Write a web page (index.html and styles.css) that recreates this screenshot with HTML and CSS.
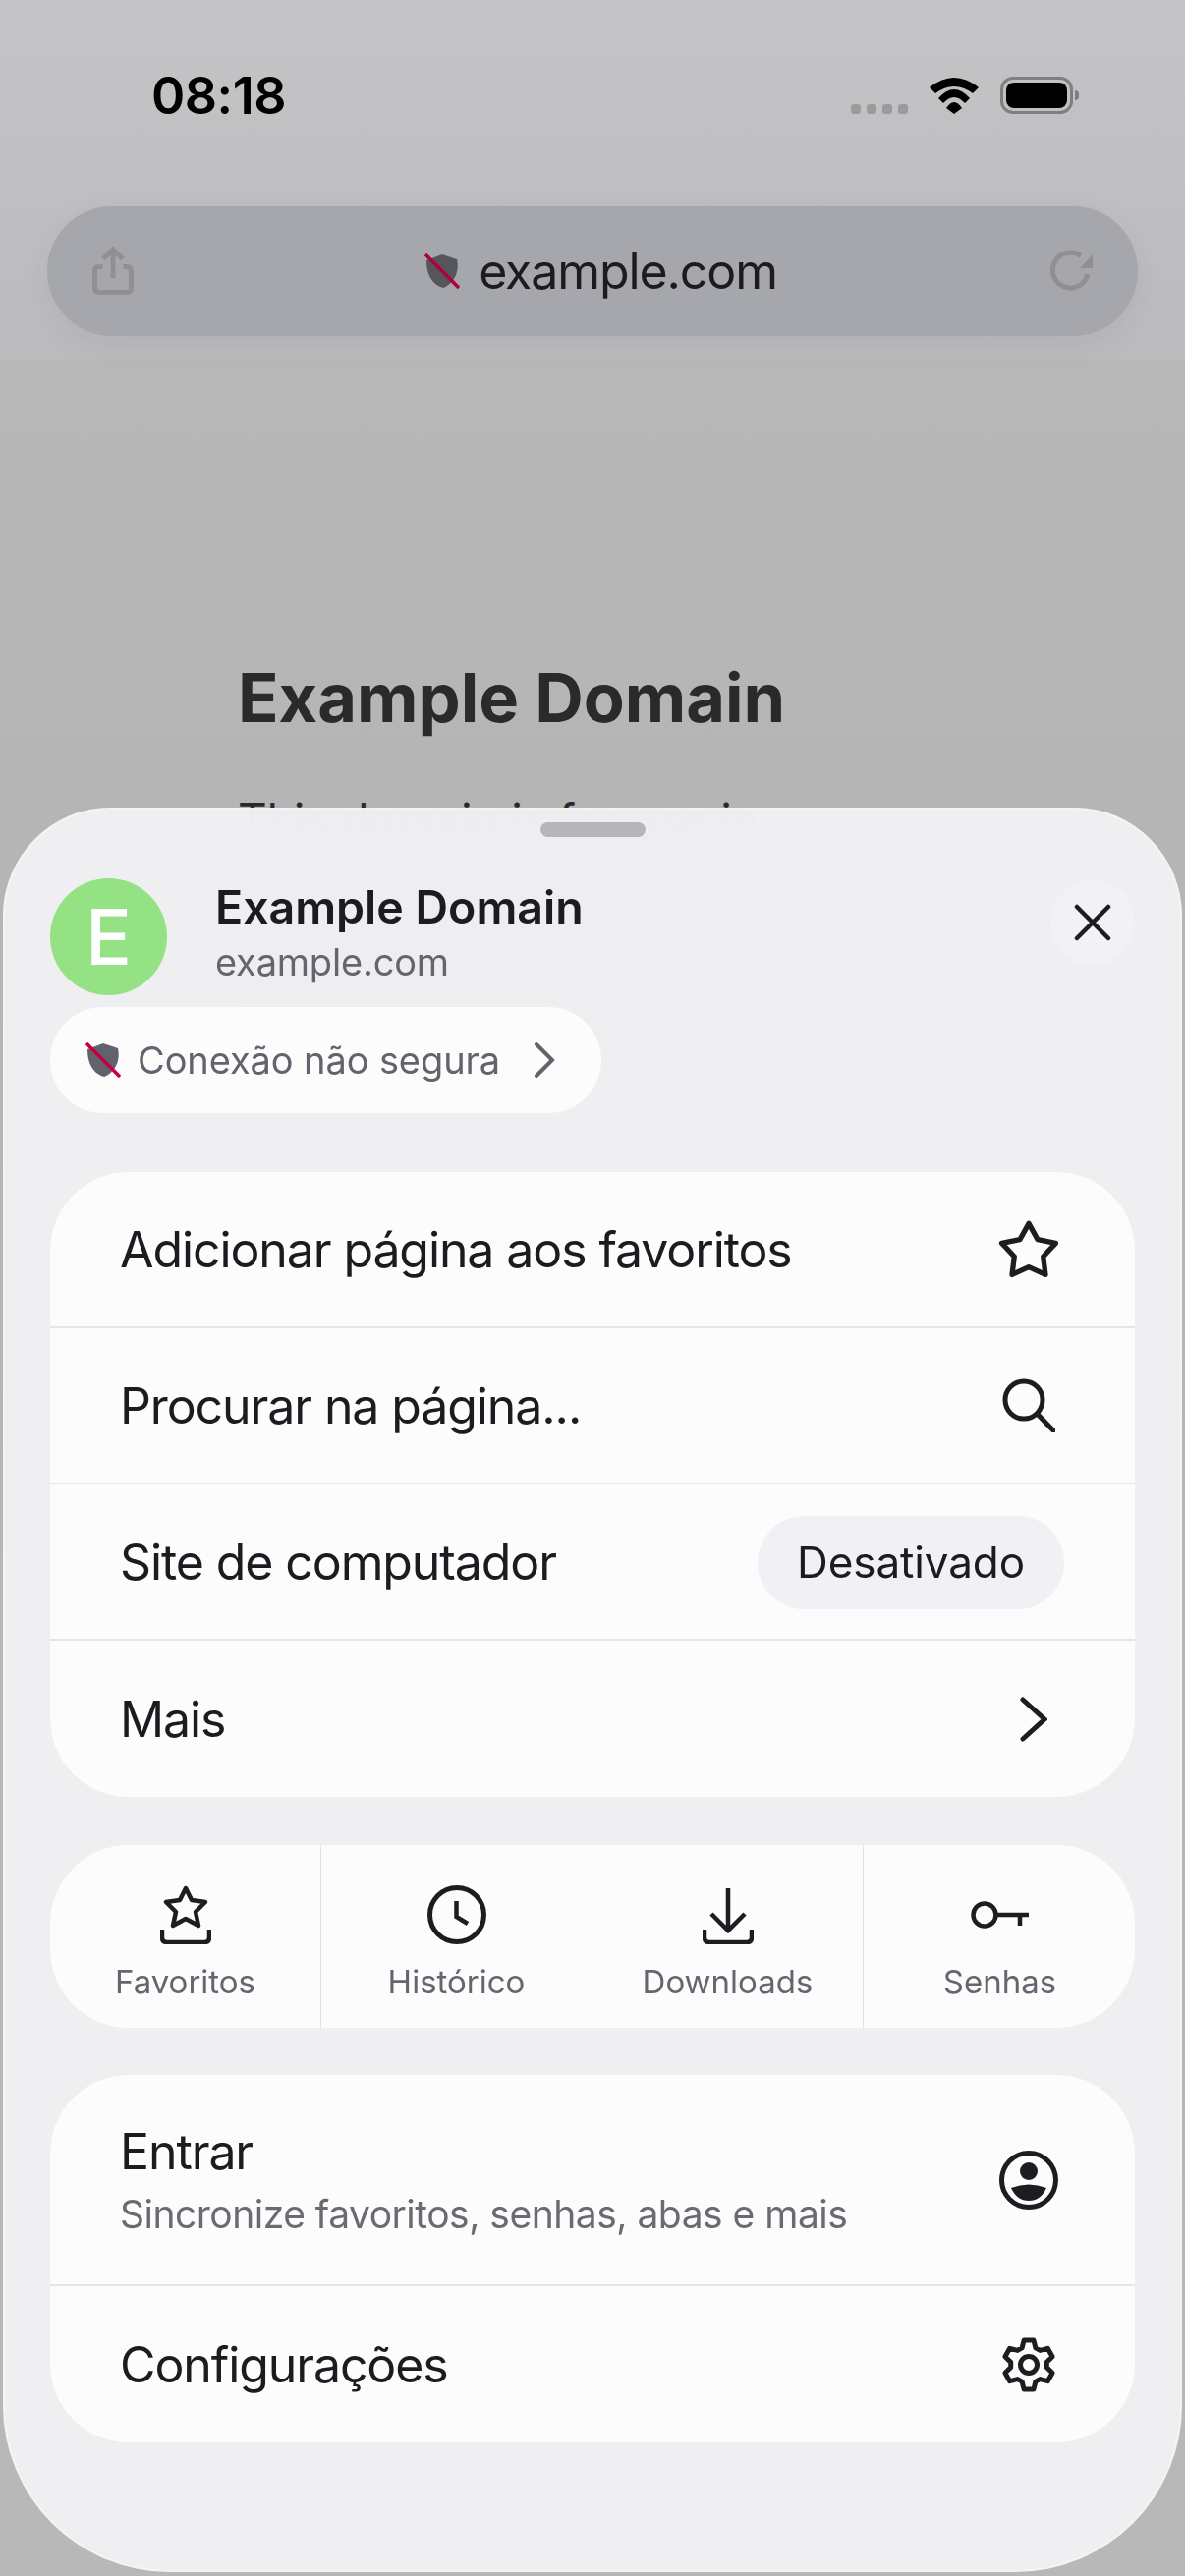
FILE: index.html
```html
<!DOCTYPE html>
<html lang="pt-BR">
<head>
<meta charset="utf-8">
<title>Example Domain</title>
<link rel="stylesheet" href="styles.css">
</head>
<body>
<div class="phone">
  <header class="topbar">
    <div class="status">
      <span class="time">08:18</span>
      <div class="status-icons">
        <div class="signal"><i></i><i></i><i></i><i></i></div>
        <svg class="wifi" width="50" height="37" viewBox="0 0 50 37"><path d="M0 10 Q25 -10 50 10 L44 16 Q25 2 6 16Z M9 21 Q25 3 41 21 L36 26 Q25 14 14 26Z M17 31 Q25 19 33 31 L25 37Z" fill="#000"/></svg>
        <div class="battery"><div class="battery-fill"></div><div class="battery-nub"></div></div>
      </div>
    </div>
    <div class="address">
      <svg class="share" width="44" height="50" viewBox="0 0 44 50" fill="none" stroke="#8f8f94" stroke-width="5"><path d="M11.500 20.500 H8 Q3.500 20.500 3.500 25 V42 Q3.500 46.500 8 46.500 H36 Q40.500 46.500 40.500 42 V25 Q40.500 20.500 36 20.500 H32.500"/><path d="M22 32 V4 M12 12.500 L22 3 L32 12.500"/></svg>
      <div class="url">
        <svg width="36" height="36" viewBox="0 0 36 36"><path d="M18 1 L33 6 C36 20 29 31 19 35 C8 32 2 22 2 7Z" fill="#55565c"/><path d="M1 1 L35 35" stroke="#b0003e" stroke-width="3.500"/></svg>
        <span>example.com</span>
      </div>
      <svg class="reload" width="44" height="42" viewBox="0 0 44 42" fill="none" stroke="#8f8f94" stroke-width="5"><path d="M38 25 A18 18 0 1 1 31 6.500"/><path d="M30 19 H43 V5Z" fill="#8f8f94" stroke="none"/></svg>
    </div>
  </header>

  <main class="page">
    <h1>Example Domain</h1>
    <p>This domain is for use in</p>
    <div class="ghost ghost-a"></div>
    <div class="ghost ghost-b"></div>
    <div class="ghost ghost-c"></div>
  </main>

  <section class="sheet">
    <div class="grabber"></div>
    <div class="site">
      <div class="avatar">E</div>
      <div class="site-text">
        <div class="site-title">Example Domain</div>
        <div class="site-url">example.com</div>
      </div>
      <div class="close">
        <svg width="38" height="38" viewBox="0 0 38 38" fill="none" stroke="#1c1c21" stroke-width="4.500" stroke-linecap="round"><path d="M3 3 L35 35 M35 3 L3 35"/></svg>
      </div>
    </div>
    <div class="chip">
      <svg width="36" height="36" viewBox="0 0 36 36"><path d="M18 1 L33 6 C36 20 29 31 19 35 C8 32 2 22 2 7Z" fill="#62626c"/><path d="M1 1 L35 35" stroke="#c4003f" stroke-width="3.500"/></svg>
      <span>Conexão não segura</span>
      <svg width="22" height="38" viewBox="0 0 22 38" fill="none" stroke="#63636e" stroke-width="4" stroke-linecap="round"><path d="M3 3 L19 19 L3 35"/></svg>
    </div>

    <div class="card card-menu">
      <div class="row">
        <span>Adicionar página aos favoritos</span>
        <div class="row-icon"><svg width="64" height="61" viewBox="0 0 60 57" fill="none" stroke="#1c1c21" stroke-width="5" stroke-linejoin="round"><path d="M30 4 L38.500 19.300 L55.700 22.700 L43.800 35.500 L45.900 52.800 L30 45.500 L14.100 52.800 L16.200 35.500 L4.300 22.700 L21.500 19.300Z"/></svg></div>
      </div>
      <div class="row">
        <span>Procurar na página...</span>
        <div class="row-icon"><svg width="54" height="55" viewBox="0 0 54 55" fill="none" stroke="#1c1c21" stroke-width="5"><circle cx="22" cy="22" r="19"/><path d="M35.500 36 L52 53" stroke-linecap="round"/></svg></div>
      </div>
      <div class="row">
        <span>Site de computador</span>
        <div class="pill">Desativado</div>
      </div>
      <div class="row">
        <span>Mais</span>
        <div class="row-icon"><svg class="chev" width="28" height="46" viewBox="0 0 28 46" fill="none" stroke="#1c1c21" stroke-width="5" stroke-linecap="round"><path d="M3 3 L25 23 L3 43"/></svg></div>
      </div>
    </div>

    <div class="card quick">
      <div class="quick-item">
        <svg width="52" height="60" viewBox="0 0 52 60" fill="none" stroke="#1c1c21" stroke-width="4.500" stroke-linejoin="round"><path d="M26 3 L32 15 L46 17 L36 27 L39 41 L26 34 L13 41 L16 27 L6 17 L20 15Z"/><path d="M2 45 V53 Q2 58 7 58 H45 Q50 58 50 53 V45"/></svg>
        <span>Favoritos</span>
      </div>
      <div class="quick-item">
        <svg width="60" height="60" viewBox="0 0 60 60" fill="none" stroke="#1c1c21" stroke-width="5"><circle cx="30" cy="30" r="27.500"/><path d="M29.500 16 V32 L41 39" stroke-width="4.500"/></svg>
        <span>Histórico</span>
      </div>
      <div class="quick-item">
        <svg width="52" height="60" viewBox="0 0 52 60" fill="none" stroke="#1c1c21" stroke-width="4.500"><path d="M26 3 V46 M9 29 L26 46 L43 29"/><path d="M2 45 V53 Q2 58 7 58 H45 Q50 58 50 53 V45"/></svg>
        <span>Downloads</span>
      </div>
      <div class="quick-item">
        <svg width="60" height="60" viewBox="0 0 60 60" fill="none" stroke="#1c1c21" stroke-width="4.500"><circle cx="14" cy="30" r="11.500"/><path d="M26 30 H59 M50 30 V41"/></svg>
        <span>Senhas</span>
      </div>
    </div>

    <div class="card card-account">
      <div class="row row-tall">
        <div class="row-text">
          <span>Entrar</span>
          <small>Sincronize favoritos, senhas, abas e mais</small>
        </div>
        <div class="row-icon"><svg width="60" height="60" viewBox="0 0 60 60" fill="#1c1c21"><circle cx="30" cy="30" r="27.500" fill="none" stroke="#1c1c21" stroke-width="5"/><circle cx="30" cy="21" r="9"/><path d="M12 38 Q30 31 48 38 Q42 51 30 51 Q18 51 12 38Z"/></svg></div>
      </div>
      <div class="row">
        <span>Configurações</span>
        <div class="row-icon"><svg width="60" height="60" viewBox="0 0 60 60" fill="none" stroke="#1c1c21" stroke-width="5" stroke-linejoin="round"><path d="M23.100 12.900 L25.100 5 H34.900 L36.900 12.900 L41.400 15.400 L49.300 13.300 L54.100 21.700 L48.300 27.400 V32.600 L54.100 38.300 L49.300 46.700 L41.400 44.600 L36.900 47.100 L34.900 55 H25.100 L23.100 47.100 L18.600 44.600 L10.700 46.700 L5.900 38.300 L11.700 32.600 V27.400 L5.900 21.700 L10.700 13.300 L18.600 15.400Z"/><circle cx="30" cy="30" r="8.500"/></svg></div>
      </div>
    </div>
  </section>
</div>
</body>
</html>
```

FILE: styles.css
```css
* { box-sizing: border-box; }
html, body { margin: 0; padding: 0; }
body { font-family: Inter, "Liberation Sans", sans-serif; color: #1b1b20; }

.phone {
  position: relative;
  width: 1206px;
  height: 2622px;
  overflow: hidden;
  background: linear-gradient(#bababa, #b5b5b5 820px, #b8b8b9);
}

.topbar {
  height: 366px;
  padding-top: 72px;
  background: linear-gradient(#c4c4c6, #bbbbbd);
}
.status {
  display: flex;
  justify-content: space-between;
  align-items: center;
  height: 50px;
  padding: 0 114px 0 154px;
}
.time { font-size: 52px; font-weight: 600; color: #000; letter-spacing: -0.5px; }
.status-icons { display: flex; align-items: center; gap: 22px; }
.signal { display: flex; gap: 6px; margin-top: 28px; }
.signal i { width: 10px; height: 10px; border-radius: 3px; background: #9b9b9d; }
.battery {
  position: relative;
  width: 74px;
  height: 38px;
  padding: 3px;
  border: 3px solid #7f7f81;
  border-radius: 13px;
}
.battery-fill { height: 100%; border-radius: 8px; background: #000; }
.battery-nub {
  position: absolute;
  right: -9px;
  top: 11px;
  width: 4px;
  height: 10px;
  border-radius: 0 5px 5px 0;
  background: #7f7f81;
}

.address {
  display: flex;
  justify-content: space-between;
  align-items: center;
  height: 132px;
  margin: 88px 48px 0;
  padding: 0 45px;
  border-radius: 66px;
  background: #a6a7ac;
  box-shadow: 0 8px 30px rgba(0, 0, 0, 0.06);
}
.url { display: flex; align-items: center; gap: 19px; padding-left: 17px; font-size: 50px; letter-spacing: -1.1px; }
.reload { margin-top: -2px; }

.page { padding: 0 0 0 242px; }
.page h1 { margin: 303px 0 0; font-size: 68.500px; line-height: 84px; font-weight: 700; color: #2a2a2a; white-space: nowrap; }
.page p { margin: 46px 0 0; font-size: 46px; line-height: 70px; color: #2a2a2a; white-space: nowrap; }
.ghost { height: 26px; margin-top: 44px; background: #2a2a2a; opacity: 0.4; }
.ghost-a { width: 720px; margin-top: 22px; }
.ghost-b { width: 640px; }
.ghost-c { width: 460px; }

.sheet {
  position: absolute;
  left: 3px;
  top: 822px;
  width: 1200px;
  height: 1796px;
  padding: 15px 48px 0;
  border-radius: 110px 110px 170px 170px;
  background: rgba(241, 241, 244, 0.97);
  backdrop-filter: blur(24px);
  box-shadow: inset 0 0 0 2px rgba(255, 255, 255, 0.35);
}
.grabber { width: 107px; height: 15px; margin: 0 auto; border-radius: 8px; background: #b5b5ba; }

.site { display: flex; align-items: center; margin-top: 42px; }
.avatar {
  display: flex;
  justify-content: center;
  align-items: center;
  flex: none;
  width: 119px;
  height: 119px;
  border-radius: 50%;
  background: #94e284;
  color: #fff;
  font-size: 78px;
  font-weight: 500;
}
.site-text { margin-left: 49px; margin-top: -10px; }
.site-title { font-size: 46.500px; line-height: 56px; font-weight: 600; }
.site-url { font-size: 38px; line-height: 46px; margin-top: 5px; color: #65656f; letter-spacing: -0.2px; }
.close {
  display: flex;
  justify-content: center;
  align-items: center;
  width: 86px;
  height: 86px;
  margin-left: auto;
  margin-top: -30px;
  border-radius: 50%;
  background: #f2f2f4;
}

.chip {
  display: inline-flex;
  align-items: center;
  height: 108px;
  margin-top: 12px;
  padding: 0 47px 0 36px;
  border-radius: 54px;
  background: #fcfcfd;
  color: #63636e;
  font-size: 38px;
  letter-spacing: -0.1px;
  gap: 17px;
}
.chip svg:last-child { margin-left: 17px; }

.card { border-radius: 80px; background: #fcfcfd; overflow: hidden; }
.card-menu { margin-top: 60px; }
.row {
  display: flex;
  justify-content: space-between;
  align-items: center;
  height: 159px;
  padding: 0 72px 0 71px;
  font-size: 50px;
  letter-spacing: -1.1px;
  border-bottom: 2px solid #e4e4e9;
}
.row:last-child { border-bottom: 0; }
.row-tall { height: 215px; }
.row-icon { display: flex; justify-content: center; width: 72px; }
.chev { margin-left: 9px; }
.pill {
  padding: 0 40px;
  height: 95px;
  line-height: 95px;
  border-radius: 48px;
  background: #f0f0f5;
  font-size: 44px;
  letter-spacing: -0.1px;
  margin-top: 2px;
}
.row-text { display: flex; flex-direction: column; gap: 10px; }
.row-text small { font-size: 39px; color: #6a6a73; letter-spacing: -0.5px; }

.quick { display: grid; grid-template-columns: 276px 276px 276px 277px; height: 186px; margin-top: 49px; }
.quick-item {
  display: flex;
  flex-direction: column;
  align-items: center;
  padding-top: 41px;
  gap: 18px;
  border-right: 1.500px solid #e2e2e6;
  color: #65656f;
  font-size: 33px;
}
.quick-item:last-child { border-right: 0; }
.card-account { margin-top: 48px; }
```
